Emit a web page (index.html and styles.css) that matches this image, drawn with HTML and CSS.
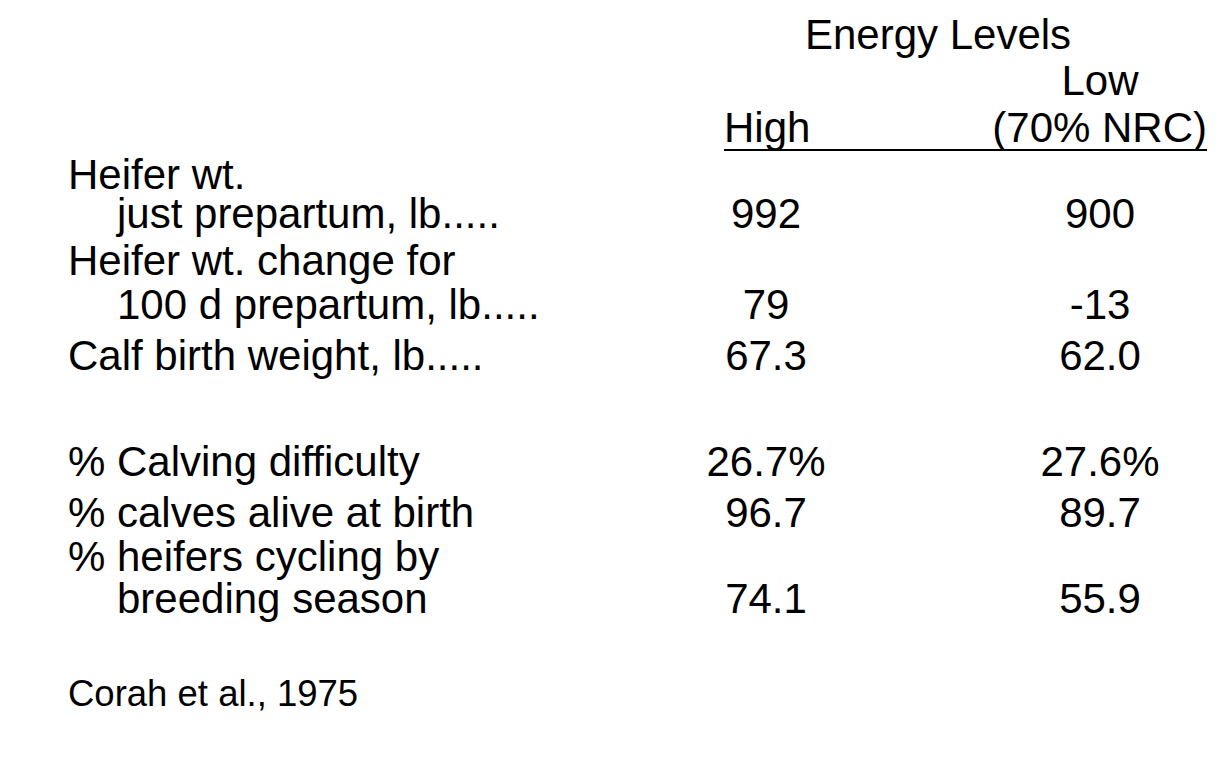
FILE: index.html
```html
<!DOCTYPE html>
<html lang="en">
<head>
<meta charset="utf-8">
<title>Energy Levels</title>
<link rel="stylesheet" href="styles.css">
</head>
<body>
<main class="slide">
  <div class="row r-title"><span class="title">Energy Levels</span></div>
  <div class="row r-low"><span class="c-low">Low</span></div>
  <div class="row r-head">
    <div class="heads"><span>High</span><span>(70% NRC)</span></div>
  </div>

  <div class="row r1"><span class="label">Heifer wt.</span></div>
  <div class="row r2"><span class="label indent">just prepartum, lb.....</span><span class="c-high">992</span><span class="c-low">900</span></div>
  <div class="row r3"><span class="label">Heifer wt. change for</span></div>
  <div class="row r4"><span class="label indent">100 d prepartum, lb.....</span><span class="c-high">79</span><span class="c-low">-13</span></div>
  <div class="row r5"><span class="label">Calf birth weight, lb.....</span><span class="c-high">67.3</span><span class="c-low">62.0</span></div>

  <div class="row r6"><span class="label">% Calving difficulty</span><span class="c-high">26.7%</span><span class="c-low">27.6%</span></div>
  <div class="row r7"><span class="label">% calves alive at birth</span><span class="c-high">96.7</span><span class="c-low">89.7</span></div>
  <div class="row r8"><span class="label">% heifers cycling by</span></div>
  <div class="row r9"><span class="label indent">breeding season</span><span class="c-high">74.1</span><span class="c-low">55.9</span></div>

  <p class="source">Corah et al., 1975</p>
</main>
</body>
</html>
```
FILE: styles.css
```css
html, body {
  margin: 0;
  padding: 0;
  background: #ffffff;
}

.slide {
  width: 1228px;
  height: 782px;
  box-sizing: border-box;
  padding: 14px 0 0 68px;
  font-family: "Liberation Sans", Arial, sans-serif;
  font-size: 42px;
  color: #000000;
  overflow: hidden;
}

.row {
  display: grid;
  grid-template-columns: 598px 200px 134px 200px;
  line-height: 42px;
  height: 42px;
  white-space: nowrap;
}

.label { grid-column: 1; }
.indent { padding-left: 49px; }
.c-high { grid-column: 2; text-align: center; }
.c-low { grid-column: 4; text-align: center; }

.title {
  grid-column: 2 / 5;
  text-align: center;
  padding-left: 10px;
}

.heads {
  grid-column: 2 / 5;
  display: flex;
  justify-content: space-between;
  margin-left: 58px;
  margin-right: -7px;
  background: linear-gradient(#000, #000) no-repeat 0 42px / 100% 2px;
  height: 46px;
}

.r-low { margin-top: 4px; }
.r-head { margin-top: 5px; }
.r1 { margin-top: 5px; }
.r2 { margin-top: -3px; }
.r3 { margin-top: 5px; }
.r4 { margin-top: 2px; }
.r5 { margin-top: 9px; }
.r6 { margin-top: 64px; }
.r7 { margin-top: 9px; }
.r8 { margin-top: 2px; }
.r9 { margin-top: 0; }

.source {
  margin: 54px 0 0;
  font-size: 36.5px;
  line-height: 40px;
}
```
